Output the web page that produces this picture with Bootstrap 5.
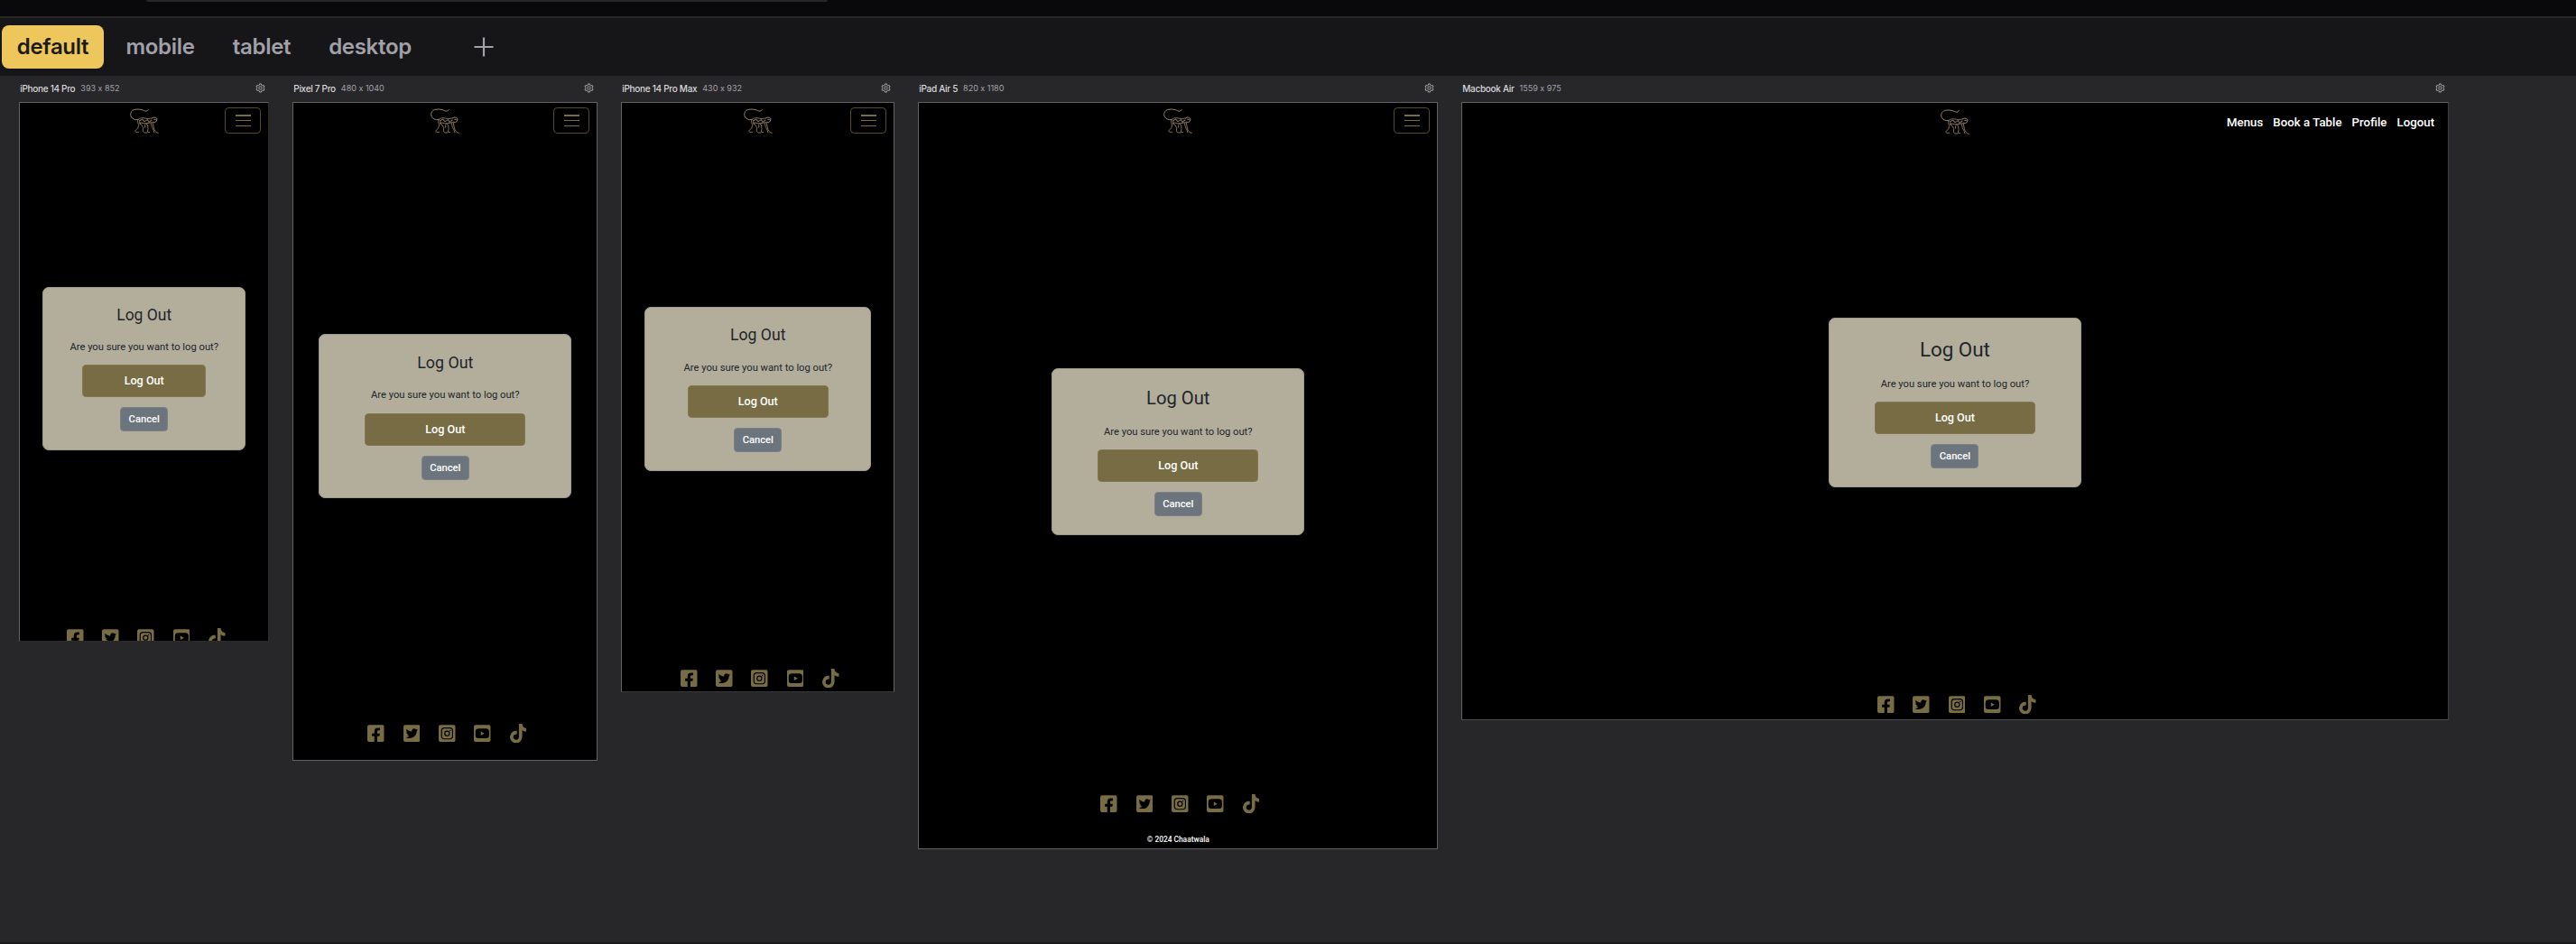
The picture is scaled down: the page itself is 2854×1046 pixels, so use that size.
<!DOCTYPE html>
<html lang="en" data-bs-theme="dark">
<head>
<meta charset="utf-8">
<title>Device preview</title>
<link rel="stylesheet" href="https://cdn.jsdelivr.net/npm/bootstrap@5.3.0/dist/css/bootstrap.min.css">
<style>
  body { background: #27272a; font-family: Inter, "Liberation Sans", sans-serif; width: 2854px; height: 1046px; overflow: hidden; }
  .titlebar { height: 20px; background: #09090b; border-bottom: 2px solid #27272a; padding-left: 162px; }
  .address { width: 755px; height: 2px; background: #27272a; border-radius: 0 0 6px 6px; }
  .suites { height: 64px; background: #161618; padding-left: 2px; gap: 7px; }
  .suite { height: 48px; padding: 0; border: 0; border-radius: 8px; font-size: 24px; font-weight: 600; letter-spacing: -.3px; color: #a1a1aa; line-height: 48px; }
  .suite.active, .suite.active:hover { background: #edc65c; color: #1c1b18; }
  .w-default { width: 113px; } .w-mobile { width: 111px; } .w-tablet { width: 100px; } .w-desktop { width: 126px; }
  .suite-add { margin-left: 44px; width: 24px; height: 24px; color: #a1a1aa; }
  .devices { padding-left: 21.2px; gap: 26px; height: 962px; border-bottom: 2px solid #1b1b1d; }
  .device { width: calc(var(--w) * .7px + 2px); }
  .device-head { height: 29px; padding: 0 4px 2px 1px; line-height: 12px; }
  .device-name { font-size: 10px; font-weight: 500; letter-spacing: -.3px; color: #d8d8da; }
  .device-size { font-size: 9px; color: #a1a1aa; margin-left: 6px; font-feature-settings: "calt" 0; }
  .gear { width: 11px; height: 11px; color: #b4b4b8; }
  .viewport { height: calc(var(--h) * .7px + 2px); background: #000; border: 1px solid #626264; font-family: Roboto, sans-serif; }
  .site-nav { height: 42px; padding: 5px 8px 0; flex: none; }
  .site-nav > div { flex: 1 1 0; }
  .brand { width: 32px; height: 28px; margin-top: 1px; }
  .burger { width: 40px; height: 29.4px; border: 1px solid #564d31; border-radius: 4.2px; gap: 4.4px; padding: 0; background: none; }
  .burger span { width: 17px; height: 1.4px; background: #786c45; }
  .site-links { gap: 11px; padding-top: 6.5px; font-size: 13.3px; font-weight: 500; color: #fff; white-space: nowrap; line-height: 19px; }
  .site-links span:last-child { margin-right: 6.5px; }
  .dialog-box { width: var(--cw); height: var(--ch); margin-top: calc(var(--ct) - 42px); background: #b3ae9c; border: 1px solid #9d9988; border-radius: 7px; padding-bottom: 19.7px; flex: none; color: #212529; }
  .dialog-title { font-size: var(--ts); font-weight: 400; line-height: 1.2; margin: 0 0 17.3px; color: #212529; }
  .dialog-text { font-size: 11.2px; line-height: 16.8px; margin: 0 0 10.7px; }
  .go { width: var(--bw); height: 36px; background: #786c45; border: 1px solid #827750; border-radius: 4.6px; color: #fff; font-size: 12.6px; font-weight: 500; padding: 0; line-height: 34px; margin-bottom: 11px; }
  .stop { width: 53px; height: 27px; background: #6c757d; border: 1px solid #7a8086; border-radius: 4px; color: #fff; font-size: 11.2px; font-weight: 500; padding: 0; line-height: 25px; }
  .social { margin-top: var(--ft); gap: 20.6px; padding-left: 4px; color: #786c45; flex: none; }
  .social svg { width: 18.7px; height: 21.4px; display: block; }
  .copyright { font-size: 8.4px; font-weight: 500; color: #fff; line-height: 12px; margin-top: 22.9px; }
  .d1 { --w: 393; --h: 852; --cw: 225.4px; --ch: 181px; --ct: 204px; --ts: 17.5px; --bw: 137px; --ft: 196.9px; }
  .d2 { --w: 480; --h: 1040; --cw: 280px; --ch: 182.3px; --ct: 256px; --ts: 17.8px; --bw: 178px; --ft: 249.6px; }
  .d3 { --w: 430; --h: 932; --cw: 250.8px; --ch: 181.7px; --ct: 226px; --ts: 17.6px; --bw: 156px; --ft: 219.2px; }
  .d4 { --w: 820; --h: 1180; --cw: 280px; --ch: 184.7px; --ct: 294px; --ts: 20.2px; --bw: 178px; --ft: 287.2px; }
  .d5 { --w: 1559; --h: 975; --cw: 280px; --ch: 187.7px; --ct: 238.3px; --ts: 22.4px; --bw: 178.6px; --ft: 229.7px; }
  .d5 .brand { margin-top: 2.3px; }
  .d1 .viewport { border-right-color: #2a2a2c; border-bottom-color: #2a2a2c; }
  .d3 .viewport { border-bottom-color: #38383a; }
  .d5 .viewport { border-right-color: #3c3c3e; border-bottom-color: #4c4c4e; }
</style>
<script src="https://cdn.jsdelivr.net/npm/bootstrap@5.3.0/dist/js/bootstrap.bundle.min.js"></script>
</head>
<body>
<svg class="d-none">
  <symbol id="gear" viewBox="0 0 24 24"><path fill="none" stroke="currentColor" stroke-width="2" stroke-linejoin="round" d="M10 2h4l.7 3.2 2.2 1.3 3.1-1 2 3.5-2.4 2.2v1.6l2.4 2.2-2 3.5-3.1-1-2.2 1.3L14 22h-4l-.7-3.2-2.2-1.3-3.1 1-2-3.500 2.400-2.200v-1.600L2 9l2-3.500 3.100 1 2.200-1.300z"/><circle cx="12" cy="12" r="3.600" fill="none" stroke="currentColor" stroke-width="2"/></symbol>
  <symbol id="monkey" viewBox="0 0 96 84">
    <g fill="none" stroke="#a18a6e" stroke-linecap="round" stroke-linejoin="round">
      <path stroke-width="2.800" d="M61 5 54 10 47 8 40 5 28 3 14 4C5 8 2 14 2 22 3 31 10 36 19 38L28 37"/>
      <path stroke-width="2.800" opacity=".85" d="M28 37C33 32 40 31 49 33L60 35 72 33M26 39C24 46 28 50 29 56L26 66 17 75 20 79 29 79M31 50 40 57 44 65 43 77 48 81 56 81M52 50 59 56 60 68 58 79 65 80M76 48 78 60 81 71 87 80 94 82M70 50 73 62 78 72 81 81"/>
      <path stroke-width="3.200" opacity=".85" stroke-dasharray="7 3" d="M31 42 41 36 48 44 58 38 64 46 72 39M38 48 50 51 62 49 74 47M32 45 36 53M50 56 50 66"/>
      <path stroke-width="2.800" stroke-dasharray="5 2" d="M73 33 79 30 86 31 90 36 88 43 82 47 75 45M80 37h7"/>
    </g>
  </symbol>
  <symbol id="fb" viewBox="0 0 448 512"><path fill="currentColor" d="M400 32H48A48 48 0 0 0 0 80v352a48 48 0 0 0 48 48h137.250V327.690h-63V256h63v-54.640c0-62.150 37-96.480 93.670-96.480 27.140 0 55.520 4.840 55.520 4.840v61h-31.270c-30.810 0-40.420 19.120-40.420 38.730V256h68.780l-11 71.690h-57.780V480H400a48 48 0 0 0 48-48V80a48 48 0 0 0-48-48z"/></symbol>
  <symbol id="tw" viewBox="0 0 448 512"><path fill="currentColor" d="M400 32H48C21.500 32 0 53.500 0 80v352c0 26.500 21.500 48 48 48h352c26.500 0 48-21.500 48-48V80c0-26.500-21.500-48-48-48zm-48.900 158.800c.2 2.800.2 5.700.2 8.500 0 86.700-66 186.600-186.600 186.600-37.200 0-71.700-10.800-100.700-29.400 5.300.6 10.400.8 15.800.8 30.700 0 58.900-10.400 81.400-28-28.800-.6-53-19.500-61.300-45.500 10.100 1.500 19.200 1.500 29.600-1.200-30-6.100-52.500-32.500-52.500-64.400v-.8c8.700 4.900 18.900 7.900 29.600 8.300a65.447 65.447 0 0 1-29.200-54.600c0-12.200 3.200-23.400 8.900-33.100 32.300 39.800 80.800 65.800 135.200 68.600-9.300-44.500 24-80.600 64-80.600 18.900 0 35.900 7.900 47.900 20.700 14.800-2.800 29-8.300 41.600-15.800-4.900 15.200-15.200 28-28.800 36.100 13.200-1.400 26-5.100 37.800-10.200-8.900 13.100-20.100 24.700-32.900 34z"/></symbol>
  <symbol id="ig" viewBox="0 0 448 512"><rect y="32" width="448" height="448" rx="48" fill="currentColor"/><g fill="none" stroke="#000"><rect x="78" y="110" width="292" height="292" rx="76" stroke-width="28"/><circle cx="224" cy="256" r="62" stroke-width="28"/></g><circle cx="302" cy="178" r="18"/></symbol>
  <symbol id="yt" viewBox="0 0 448 512"><path fill="currentColor" d="M186.800 202.100l95.200 54.100-95.200 54.100V202.100zM448 80v352c0 26.500-21.500 48-48 48H48c-26.500 0-48-21.500-48-48V80c0-26.500 21.500-48 48-48h352c26.500 0 48 21.500 48 48zm-42 176.300s0-59.600-7.600-88.200c-4.200-15.800-16.500-28.200-32.200-32.400C337.900 128 224 128 224 128s-113.900 0-142.200 7.700c-15.700 4.200-28 16.600-32.200 32.400-7.600 28.500-7.600 88.200-7.600 88.200s0 59.600 7.600 88.200c4.200 15.800 16.500 27.700 32.200 31.900C110.100 384 224 384 224 384s113.900 0 142.200-7.700c15.700-4.200 28-16.100 32.200-31.900 7.600-28.500 7.600-88.100 7.600-88.100z"/></symbol>
  <symbol id="tk" viewBox="0 0 448 512"><path fill="currentColor" d="M448 209.910a210.060 210.060 0 0 1-122.770-39.250V349.380A162.550 162.550 0 1 1 185 188.310V278.200a74.620 74.620 0 1 0 52.230 71.180V0h88a121.180 121.180 0 0 0 1.860 22.170A122.180 122.180 0 0 0 381 102.390a121.430 121.430 0 0 0 67 20.140Z"/></symbol>
</svg>

<header>
  <div class="titlebar"><div class="address"></div></div>
  <nav class="suites d-flex align-items-center">
    <button class="suite btn active w-default">default</button>
    <button class="suite btn w-mobile">mobile</button>
    <button class="suite btn w-tablet">tablet</button>
    <button class="suite btn w-desktop">desktop</button>
    <svg class="suite-add" viewBox="0 0 24 24"><path d="M12 1.500v21M1.500 12h21" stroke="currentColor" stroke-width="2.200"/></svg>
  </nav>
</header>

<main class="devices d-flex align-items-start">
  <section class="device d1 flex-shrink-0">
    <div class="device-head d-flex align-items-center"><span class="device-name">iPhone 14 Pro</span><span class="device-size">393 x 852</span><svg class="gear ms-auto"><use href="#gear"/></svg></div>
    <div class="viewport d-flex flex-column align-items-center overflow-hidden">
      <div class="site-nav d-flex align-items-start w-100"><div></div><svg class="brand"><use href="#monkey"/></svg><div class="d-flex justify-content-end"><button class="burger d-flex flex-column align-items-center justify-content-center"><span></span><span></span><span></span></button></div></div>
      <div class="dialog-box d-flex flex-column align-items-center justify-content-end"><h2 class="dialog-title">Log Out</h2><p class="dialog-text">Are you sure you want to log out?</p><button class="btn go">Log Out</button><button class="btn stop">Cancel</button></div>
      <div class="social d-flex"><svg><use href="#fb"/></svg><svg><use href="#tw"/></svg><svg><use href="#ig"/></svg><svg><use href="#yt"/></svg><svg><use href="#tk"/></svg></div>
    </div>
  </section>
  <section class="device d2 flex-shrink-0">
    <div class="device-head d-flex align-items-center"><span class="device-name">Pixel 7 Pro</span><span class="device-size">480 x 1040</span><svg class="gear ms-auto"><use href="#gear"/></svg></div>
    <div class="viewport d-flex flex-column align-items-center overflow-hidden">
      <div class="site-nav d-flex align-items-start w-100"><div></div><svg class="brand"><use href="#monkey"/></svg><div class="d-flex justify-content-end"><button class="burger d-flex flex-column align-items-center justify-content-center"><span></span><span></span><span></span></button></div></div>
      <div class="dialog-box d-flex flex-column align-items-center justify-content-end"><h2 class="dialog-title">Log Out</h2><p class="dialog-text">Are you sure you want to log out?</p><button class="btn go">Log Out</button><button class="btn stop">Cancel</button></div>
      <div class="social d-flex"><svg><use href="#fb"/></svg><svg><use href="#tw"/></svg><svg><use href="#ig"/></svg><svg><use href="#yt"/></svg><svg><use href="#tk"/></svg></div>
    </div>
  </section>
  <section class="device d3 flex-shrink-0">
    <div class="device-head d-flex align-items-center"><span class="device-name">iPhone 14 Pro Max</span><span class="device-size">430 x 932</span><svg class="gear ms-auto"><use href="#gear"/></svg></div>
    <div class="viewport d-flex flex-column align-items-center overflow-hidden">
      <div class="site-nav d-flex align-items-start w-100"><div></div><svg class="brand"><use href="#monkey"/></svg><div class="d-flex justify-content-end"><button class="burger d-flex flex-column align-items-center justify-content-center"><span></span><span></span><span></span></button></div></div>
      <div class="dialog-box d-flex flex-column align-items-center justify-content-end"><h2 class="dialog-title">Log Out</h2><p class="dialog-text">Are you sure you want to log out?</p><button class="btn go">Log Out</button><button class="btn stop">Cancel</button></div>
      <div class="social d-flex"><svg><use href="#fb"/></svg><svg><use href="#tw"/></svg><svg><use href="#ig"/></svg><svg><use href="#yt"/></svg><svg><use href="#tk"/></svg></div>
    </div>
  </section>
  <section class="device d4 flex-shrink-0">
    <div class="device-head d-flex align-items-center"><span class="device-name">iPad Air 5</span><span class="device-size">820 x 1180</span><svg class="gear ms-auto"><use href="#gear"/></svg></div>
    <div class="viewport d-flex flex-column align-items-center overflow-hidden">
      <div class="site-nav d-flex align-items-start w-100"><div></div><svg class="brand"><use href="#monkey"/></svg><div class="d-flex justify-content-end"><button class="burger d-flex flex-column align-items-center justify-content-center"><span></span><span></span><span></span></button></div></div>
      <div class="dialog-box d-flex flex-column align-items-center justify-content-end"><h2 class="dialog-title">Log Out</h2><p class="dialog-text">Are you sure you want to log out?</p><button class="btn go">Log Out</button><button class="btn stop">Cancel</button></div>
      <div class="social d-flex"><svg><use href="#fb"/></svg><svg><use href="#tw"/></svg><svg><use href="#ig"/></svg><svg><use href="#yt"/></svg><svg><use href="#tk"/></svg></div>
      <div class="copyright">© 2024 Chaatwala</div>
    </div>
  </section>
  <section class="device d5 flex-shrink-0">
    <div class="device-head d-flex align-items-center"><span class="device-name">Macbook Air</span><span class="device-size">1559 x 975</span><svg class="gear ms-auto"><use href="#gear"/></svg></div>
    <div class="viewport d-flex flex-column align-items-center overflow-hidden">
      <div class="site-nav d-flex align-items-start w-100"><div></div><svg class="brand"><use href="#monkey"/></svg><div class="site-links d-flex justify-content-end"><span>Menus</span><span>Book a Table</span><span>Profile</span><span>Logout</span></div></div>
      <div class="dialog-box d-flex flex-column align-items-center justify-content-end"><h2 class="dialog-title">Log Out</h2><p class="dialog-text">Are you sure you want to log out?</p><button class="btn go">Log Out</button><button class="btn stop">Cancel</button></div>
      <div class="social d-flex"><svg><use href="#fb"/></svg><svg><use href="#tw"/></svg><svg><use href="#ig"/></svg><svg><use href="#yt"/></svg><svg><use href="#tk"/></svg></div>
    </div>
  </section>
</main>
</body>
</html>
